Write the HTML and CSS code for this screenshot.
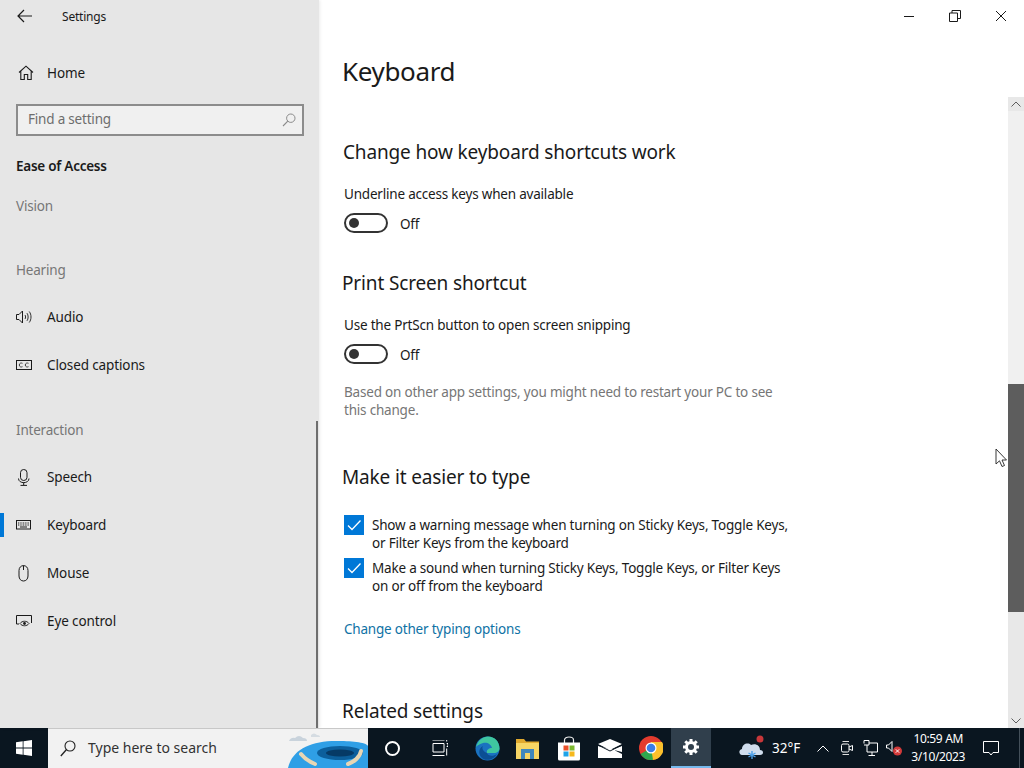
FILE: index.html
```html
<!DOCTYPE html>
<html lang="en">

<head>
    <meta charset="UTF-8">
    <title>Settings</title>
    <link rel="stylesheet" href="styles.css">
</head>

<body>
    <div class="window">
        <!-- Left navigation -->
        <aside class="sidebar">
            <div class="app-title">
                <svg class="back-icon" width="16" height="14" viewBox="0 0 16 14"><path d="M7 1 1 7l6 6M1 7h14" fill="none" stroke="#1a1a1a" stroke-width="1.2"/></svg>
                <span>Settings</span>
            </div>

            <div class="nav-item nav-home">
                <svg class="nav-icon" width="16" height="16" viewBox="0 0 16 16"><path d="M1 7.5 8 1.2l7 6.3M2.8 6.2V14.500H6.300V9.500H9.700V14.500H13.200V6.200" fill="none" stroke="#1a1a1a" stroke-width="1.1"/></svg>
                <span>Home</span>
            </div>

            <div class="search-box">
                <span>Find a setting</span>
                <svg width="14" height="14" viewBox="0 0 14 14"><circle cx="8.800" cy="5.200" r="4.200" fill="none" stroke="#8a8a8a"/><path d="M5.800 8.200 1 13" stroke="#8a8a8a" stroke-width="1.1"/></svg>
            </div>

            <div class="group-title">Ease of Access</div>
            <div class="section-label label-vision">Vision</div>
            <div class="section-label label-hearing">Hearing</div>

            <div class="nav-item">
                <svg class="nav-icon" width="16" height="14" viewBox="0 0 16 14"><path d="M.5 4.500H3L6.500 1V13L3 9.500H.5Z" fill="none" stroke="#1a1a1a"/><path d="M9 5C9.800 6 9.800 8 9 9M11 3.200C12.500 5 12.500 9 11 10.800M13.200 1.500C15.600 4.500 15.600 9.500 13.200 12.500" fill="none" stroke="#1a1a1a" stroke-width=".9"/></svg>
                <span>Audio</span>
            </div>
            <div class="nav-item">
                <svg class="nav-icon" width="16" height="10" viewBox="0 0 16 10"><rect x=".5" y=".5" width="15" height="9" fill="none" stroke="#1a1a1a"/><path d="M6.500 3.300C5 2.600 3.300 3.200 3.300 5S5 7.400 6.500 6.700M12.500 3.300C11 2.600 9.300 3.200 9.300 5S11 7.400 12.500 6.700" fill="none" stroke="#1a1a1a" stroke-width=".8"/></svg>
                <span>Closed captions</span>
            </div>

            <div class="section-label label-interaction">Interaction</div>

            <div class="nav-item">
                <svg class="nav-icon" width="16" height="17" viewBox="0 0 16 17"><rect x="4.500" y=".5" width="6.500" height="11" rx="3.200" fill="none" stroke="#1a1a1a"/><path d="M2.500 9.500C2.500 15 13 15 13 9.500M7.700 13.500V16M4.500 16.400H11" fill="none" stroke="#1a1a1a"/></svg>
                <span>Speech</span>
            </div>
            <div class="nav-item nav-active">
                <svg class="nav-icon" width="16" height="10" viewBox="0 0 16 10"><rect x=".5" y=".5" width="14" height="8.500" fill="none" stroke="#1a1a1a"/><path d="M2 3h11M2 5h11" stroke="#1a1a1a" stroke-dasharray="1 .7"/><path d="M4 7h7" stroke="#1a1a1a"/></svg>
                <span>Keyboard</span>
            </div>
            <div class="nav-item">
                <svg class="nav-icon" width="16" height="17" viewBox="0 0 16 17"><path d="M3 5.500C3 2.500 5 .6 7.500 .6S12 2.500 12 5.500V11C12 14 10 16 7.500 16S3 14 3 11ZM7.500 .6V5" fill="none" stroke="#1a1a1a"/></svg>
                <span>Mouse</span>
            </div>
            <div class="nav-item">
                <svg class="nav-icon" width="16" height="12" viewBox="0 0 16 12"><path d="M.5 9V.5H15.500V8" fill="none" stroke="#1a1a1a"/><path d="M.5 9H3" stroke="#1a1a1a"/><path d="M4 8.500C6 5.500 11 5.500 13 8.500 11 11.500 6 11.500 4 8.500Z" fill="none" stroke="#1a1a1a" stroke-width=".9"/><circle cx="8.500" cy="8.500" r="1.400" fill="#1a1a1a"/></svg>
                <span>Eye control</span>
            </div>

            <div class="sidebar-thumb"></div>
        </aside>

        <!-- Page content -->
        <main class="main">
            <header class="main-header">
                <h1>Keyboard</h1>
                <div class="window-controls">
                    <svg width="12" height="12" viewBox="0 0 12 12"><path d="M1 6.500H11" stroke="#1a1a1a"/></svg>
                    <svg width="12" height="12" viewBox="0 0 12 12"><path d="M.5 3H8.500V11.500H.5ZM3 3V.5H11.500V8.500H8.500" fill="none" stroke="#1a1a1a"/></svg>
                    <svg width="12" height="12" viewBox="0 0 12 12"><path d="M1 1 11 11M11 1 1 11" stroke="#1a1a1a"/></svg>
                </div>
            </header>

            <div class="content-row">
                <div class="content">
                    <section class="section-first">
                        <h2>Change how keyboard shortcuts work</h2>
                        <div class="field-label">Underline access keys when available</div>
                        <div class="toggle-row">
                            <span class="toggle"></span>
                            <span class="toggle-text">Off</span>
                        </div>
                    </section>

                    <section class="section-print">
                        <h2>Print Screen shortcut</h2>
                        <div class="field-label">Use the PrtScn button to open screen snipping</div>
                        <div class="toggle-row">
                            <span class="toggle"></span>
                            <span class="toggle-text">Off</span>
                        </div>
                        <p class="note">Based on other app settings, you might need to restart your PC to see this change.</p>
                    </section>

                    <section class="section-type">
                        <h2>Make it easier to type</h2>
                        <div class="check-row">
                            <span class="check"><svg width="20" height="20" viewBox="0 0 20 20"><path d="M4 10.500 8 14.500 16.500 5.500" fill="none" stroke="#fff" stroke-width="1.3"/></svg></span>
                            <span>Show a warning message when turning on Sticky Keys, Toggle Keys, or Filter Keys from the keyboard</span>
                        </div>
                        <div class="check-row">
                            <span class="check"><svg width="20" height="20" viewBox="0 0 20 20"><path d="M4 10.500 8 14.500 16.500 5.500" fill="none" stroke="#fff" stroke-width="1.3"/></svg></span>
                            <span>Make a sound when turning Sticky Keys, Toggle Keys, or Filter Keys on or off from the keyboard</span>
                        </div>
                        <a class="link">Change other typing options</a>
                    </section>

                    <section class="section-related">
                        <h2>Related settings</h2>
                    </section>
                </div>

                <div class="scrollbar">
                    <div class="scroll-btn">
                        <svg width="10" height="6" viewBox="0 0 10 6"><path d="M.5 5.500 5 1l4.500 4.500" fill="none" stroke="#5d5d5d"/></svg>
                    </div>
                    <div class="scroll-gap-top"></div>
                    <div class="scroll-thumb"></div>
                    <div class="scroll-gap-bottom"></div>
                    <div class="scroll-btn">
                        <svg width="10" height="6" viewBox="0 0 10 6"><path d="M.5 .5 5 5l4.500-4.500" fill="none" stroke="#5d5d5d"/></svg>
                    </div>
                </div>
            </div>
        </main>

        <svg class="cursor" width="13" height="20" viewBox="0 0 13 20"><path d="M1 1V16L4.500 12.800 7 18.500 9.500 17.500 7 12H11.500Z" fill="#fff" stroke="#222" stroke-width=".9"/></svg>
    </div>

    <!-- Taskbar -->
    <footer class="taskbar">
        <div class="start">
            <svg width="16" height="16" viewBox="0 0 16 16"><path d="M0 2.300 6.700 1.300V7.600H0ZM7.500 1.200 16 0V7.600H7.500ZM0 8.400H6.700V14.700L0 13.700ZM7.500 8.400H16V16L7.500 14.800Z" fill="#fff"/></svg>
        </div>
        <div class="taskbar-search">
            <svg width="16" height="17" viewBox="0 0 16 17"><circle cx="10" cy="6" r="5" fill="none" stroke="#222" stroke-width="1.100"/><path d="M6.500 9.500 .8 16" stroke="#222" stroke-width="1.300"/></svg>
            <span>Type here to search</span>
            <svg class="search-art" width="82" height="40" viewBox="0 0 82 40">
                <path d="M3 13Q5 9 9 10 13 6 17 10 21 10 21 13Z" fill="#c9d3dc"/>
                <path d="M25 7Q28 4 31 7 34 7 34 9H25Z" fill="#d5dce2"/>
                <path d="M2 40C6 22 24 13 50 13 64 13 80 14 82 18V40Z" fill="#2f9fe6"/>
                <ellipse cx="54" cy="25" rx="23" ry="7" fill="#0c5f9c"/>
                <ellipse cx="54" cy="25" rx="14" ry="3.500" fill="#063a66"/>
                <path d="M15 26C19 31 24 34 29 36M62 36C68 34 74 29 75 23" fill="none" stroke="#e8d6b4" stroke-width="4" stroke-linecap="round"/>
            </svg>
        </div>

        <div class="task-icons">
            <div class="task-icon task-wide"><span class="cortana"></span></div>
            <div class="task-icon task-wide">
                <svg width="16" height="16" viewBox="0 0 16 16"><path d="M.5 0H12.500M.5 15.500H12.500M1 3.500H12V12H1Z" fill="none" stroke="#fff"/><path d="M14.700 0V1.500M14.700 3.500H16V6.500H14.700M14.700 8.500V15.500" fill="none" stroke="#fff"/></svg>
            </div>
            <div class="task-icon task-edge">
                <svg width="25" height="25" viewBox="0 0 25 25">
                    <circle cx="12.500" cy="12.500" r="12" fill="#1a72c0"/>
                    <path d="M1 11C3 4 8 .5 13 .5 20 .5 24.500 6 24.500 12.500 24.500 15 22 17 19 17H12C11 14 14 12 17 12 16 8 12 6 8 7 4 8 2 10 1 11Z" fill="#3fc6a0"/>
                    <path d="M12 17C13 20 18 21 22 18 19 24 10 26 6 21 3 17 4 12 8 10 6 13 9 16 12 17Z" fill="#0b4f94"/>
                </svg>
            </div>
            <div class="task-icon task-folder">
                <svg width="23" height="21" viewBox="0 0 23 21"><path d="M0 1H8L10 3.500H23V21H0Z" fill="#e0a92e"/><path d="M0 5H23V21H0Z" fill="#f6d565"/><path d="M5 11H18V21H14V15H9V21H5Z" fill="#3f87bd"/></svg>
            </div>
            <div class="task-icon">
                <svg width="24" height="25" viewBox="0 0 24 25"><path d="M7.500 8V4C7.500 0 16.500 0 16.500 4V8" fill="none" stroke="#eee" stroke-width="1.200"/><path d="M1 6.500H23V23Q23 24.500 21.500 24.500H2.500Q1 24.500 1 23Z" fill="#fff"/><rect x="6.500" y="9.500" width="5" height="5" fill="#e8502a"/><rect x="12.500" y="9.500" width="5" height="5" fill="#7cb82f"/><rect x="6.500" y="15.500" width="5" height="5" fill="#1fa3e8"/><rect x="12.500" y="15.500" width="5" height="5" fill="#f6b81c"/></svg>
            </div>
            <div class="task-icon">
                <svg width="24" height="19" viewBox="0 0 24 19"><path d="M0 5 12 0 24 5 12 11Z" fill="#fff"/><path d="M0 7V19H24V15L9 7.500 12 11.500 24 7V13Z" fill="#fff"/><path d="M0 6 12 12 24 6" fill="none" stroke="#0a1620"/></svg>
            </div>
            <div class="task-icon">
                <svg width="24" height="24" viewBox="0 0 24 24">
                    <circle cx="12" cy="12" r="12" fill="#e33b2e"/>
                    <path d="M12 6H23A12 12 0 0 1 12 24Z" fill="#fbc02d"/>
                    <path d="M12 12 14 23.800A12 12 0 0 1 1.600 18Z" fill="#2fa84f"/>
                    <circle cx="12" cy="12" r="5.500" fill="#fff"/>
                    <circle cx="12" cy="12" r="4.300" fill="#3b7de8"/>
                </svg>
            </div>
            <div class="task-icon task-active">
                <svg width="18" height="18" viewBox="0 0 18 18"><path d="M9 1V17M1 9H17M3.300 3.300 14.700 14.700M14.700 3.300 3.300 14.700" stroke="#fff" stroke-width="3"/><circle cx="9" cy="9" r="6" fill="#fff"/><circle cx="9" cy="9" r="3" fill="#303f4c"/></svg>
            </div>
        </div>

        <div class="tray">
            <div class="weather">
                <svg width="26" height="26" viewBox="0 0 26 26">
                    <path d="M3 20C0 20-1 15 3 14 3 9 9 7 12 10 16 8 21 10 21 15 25 15 25 20 21 20Z" fill="#cfdcec"/>
                    <path d="M13 16V24M9.500 18 16.500 22M16.500 18 9.500 22" stroke="#4a9fe8" stroke-width="1.400"/>
                    <circle cx="21" cy="4" r="3.500" fill="#c8373a"/>
                </svg>
                <span>32°F</span>
            </div>
            <svg class="tray-chevron" width="12" height="7" viewBox="0 0 12 7"><path d="M.5 6.500 6 1l5.500 5.500" fill="none" stroke="#fff"/></svg>
            <svg class="tray-meet" width="12" height="16" viewBox="0 0 12 16"><path d="M1.500 1.500H8M1.500 14.500H8" stroke="#ddd"/><rect x=".5" y="4" width="7.500" height="8" rx="1.500" fill="none" stroke="#fff"/><path d="M8 7 11.500 5.500V10.500L8 9" fill="none" stroke="#fff"/></svg>
            <svg class="tray-net" width="16" height="16" viewBox="0 0 16 16"><path d="M2 3.500V.5H7V5H2M7 3H15.500V12H5V5M10 12V15M6.500 15.500H13" fill="none" stroke="#fff"/></svg>
            <svg class="tray-volume" width="16" height="16" viewBox="0 0 16 16"><path d="M.5 5H2.500L6 1.500V11.500L2.500 8H.5Z" fill="none" stroke="#fff"/><circle cx="11.500" cy="11" r="4.500" fill="#d23a3a"/><path d="M9.800 9.300 13.200 12.700M13.200 9.300 9.800 12.700" stroke="#fff"/></svg>
            <div class="clock">
                <span>10:59 AM</span>
                <span>3/10/2023</span>
            </div>
            <svg class="tray-notify" width="16" height="15" viewBox="0 0 16 15"><path d="M.5 .5H15.500V11.500H10L8 14 6 11.500H.5Z" fill="none" stroke="#fff"/></svg>
            <span class="show-desktop"></span>
        </div>
    </footer>
</body>

</html>
```

FILE: styles.css
```css
html, body {
    margin: 0;
    height: 768px;
    overflow: hidden;
}

body {
    font-family: "Noto Sans", "Open Sans", sans-serif;
    font-size: 13.5px;
    letter-spacing: -0.2px;
    color: #1a1a1a;
    background: #ffffff;
}

.window {
    position: relative;
    display: flex;
    height: 728px;
}

/* Sidebar */
.sidebar {
    position: relative;
    width: 319px;
    flex-shrink: 0;
    box-sizing: border-box;
    background: #e6e6e6;
    box-shadow: 1px 0 3px rgba(0, 0, 0, 0.08);
    display: flex;
    flex-direction: column;
}

.app-title {
    display: flex;
    align-items: center;
    height: 32px;
    padding-left: 17px;
    font-size: 12px;
}

.back-icon {
    margin-right: 29px;
}

.nav-item {
    position: relative;
    display: flex;
    align-items: center;
    height: 48px;
    padding-left: 16px;
    flex-shrink: 0;
    letter-spacing: -0.12px;
}

.nav-icon {
    margin-right: 15px;
}

.nav-home {
    margin-top: 17px;
}

.nav-home .nav-icon {
    margin-left: 2px;
    margin-right: 13px;
}

.nav-active::before {
    content: "";
    position: absolute;
    left: 0;
    top: 12px;
    width: 4px;
    height: 24px;
    background: #0078d7;
}

.search-box {
    display: flex;
    align-items: center;
    justify-content: space-between;
    box-sizing: border-box;
    height: 32px;
    margin: 7px 15px 0 16px;
    padding: 0 6px 0 10px;
    border: 2px solid #8c8c8c;
    background: #f0f0f0;
    color: #6d6d6d;
}

.search-box span {
    margin-top: -3px;
}

.group-title {
    margin: 20px 16px 0;
    line-height: 20px;
    font-weight: 600;
    letter-spacing: -0.25px;
}

.section-label {
    margin-left: 16px;
    line-height: 20px;
    color: #767676;
}

.label-vision {
    margin-top: 20px;
}

.label-hearing {
    margin-top: 44px;
    margin-bottom: 13px;
}

.label-interaction {
    margin-top: 31px;
    margin-bottom: 13px;
}

.sidebar-thumb {
    position: absolute;
    right: 1px;
    top: 421px;
    bottom: 0;
    width: 2px;
    background: #6e6e6e;
}

/* Main area */
.main {
    flex: 1;
    min-width: 0;
    display: flex;
    flex-direction: column;
}

.main-header {
    display: flex;
    justify-content: space-between;
    height: 97px;
    flex-shrink: 0;
}

h1 {
    margin: 49px 0 0 23px;
    font-size: 26px;
    line-height: 44px;
    font-weight: 400;
    letter-spacing: -0.35px;
}

.window-controls {
    display: flex;
    gap: 34px;
    padding: 10px 17px 0 0;
    height: 12px;
}

.content-row {
    flex: 1;
    min-height: 0;
    display: flex;
}

.content {
    flex: 1;
    min-width: 0;
    overflow: hidden;
    padding-left: 25px;
}

h2 {
    margin: 0 0 0 -2px;
    font-size: 19px;
    line-height: 28px;
    font-weight: 400;
    letter-spacing: -0.15px;
}

.section-first h2 {
    margin-left: -1px;
}

.section-first {
    padding-top: 41px;
}

.section-print {
    padding-top: 36px;
}

.section-type {
    padding-top: 44px;
}

.section-related {
    padding-top: 58px;
}

.field-label {
    margin-top: 18px;
    line-height: 20px;
}

.toggle-row {
    display: flex;
    align-items: center;
    gap: 12px;
    margin-top: 9px;
    height: 20px;
}

.toggle-text {
    margin-top: 2px;
}

.toggle {
    position: relative;
    box-sizing: border-box;
    width: 44px;
    height: 20px;
    border: 2px solid #333333;
    border-radius: 10px;
}

.toggle::after {
    content: "";
    position: absolute;
    left: 3px;
    top: 3px;
    width: 10px;
    height: 10px;
    border-radius: 50%;
    background: #333333;
}

.note {
    width: 450px;
    margin: 19px 0 0;
    line-height: 18px;
    color: #767676;
}

.check-row {
    display: flex;
    gap: 8px;
    width: 450px;
    line-height: 18px;
    margin-bottom: 7px;
}

.section-type h2 {
    margin-bottom: 25px;
}

.check {
    width: 20px;
    height: 20px;
    margin-top: -1px;
    flex-shrink: 0;
    background: #0078d7;
}

.check svg {
    display: block;
}

.link {
    display: block;
    margin-top: 24px;
    line-height: 20px;
    color: #0f72a5;
}

.scrollbar {
    width: 16px;
    flex-shrink: 0;
    display: flex;
    flex-direction: column;
}

.scroll-btn {
    height: 14px;
    flex-shrink: 0;
    display: flex;
    align-items: center;
    justify-content: center;
    background: #e8e8e8;
}

.scroll-gap-top {
    height: 273px;
    background: #f0f0f0;
}

.scroll-thumb {
    height: 228px;
    background: #5d5d5d;
}

.scroll-gap-bottom {
    flex: 1;
    background: #e8e8e8;
}

.cursor {
    position: absolute;
    left: 995px;
    top: 448px;
}

/* Taskbar */
.taskbar {
    display: flex;
    align-items: center;
    height: 40px;
    background: #0a1620;
    color: #ffffff;
}

.start {
    width: 48px;
    height: 40px;
    display: flex;
    align-items: center;
    justify-content: center;
}

.taskbar-search {
    position: relative;
    display: flex;
    align-items: center;
    box-sizing: border-box;
    width: 320px;
    height: 40px;
    padding-left: 12px;
    background: #f2f2f2;
    border-top: 1px solid #c8c8c8;
    color: #333333;
    font-size: 14px;
    letter-spacing: 0;
    overflow: hidden;
}

.taskbar-search > span {
    margin: -3px 0 0 12px;
}

.search-art {
    position: absolute;
    right: 0;
    top: -1px;
}

.task-icons {
    display: flex;
    height: 40px;
}

.task-icon {
    width: 41px;
    height: 40px;
    display: flex;
    align-items: center;
    justify-content: center;
}

.task-wide {
    width: 48px;
}

.task-edge {
    width: 46px;
}

.task-folder {
    width: 34px;
    margin-right: 4px;
}

.cortana {
    box-sizing: border-box;
    width: 15px;
    height: 15px;
    border: 2px solid #ffffff;
    border-radius: 50%;
}

.task-active {
    box-sizing: border-box;
    background: #303f4c;
    border-bottom: 2px solid #76b9ed;
    width: 40px;
}

.tray {
    flex: 1;
    display: flex;
    align-items: center;
    height: 40px;
    padding-left: 28px;
}

.weather {
    display: flex;
    align-items: center;
    gap: 7px;
    font-size: 13.5px;
    letter-spacing: 0;
}

.tray-chevron {
    margin-left: 17px;
}

.tray-meet {
    margin-left: 12px;
}

.tray-net {
    margin-left: 9px;
}

.tray-volume {
    margin-left: 8px;
}

.clock {
    display: flex;
    flex-direction: column;
    align-items: center;
    width: 60px;
    margin-left: 6px;
    font-size: 12px;
    line-height: 18px;
    letter-spacing: -0.35px;
}

.tray-notify {
    margin-left: 15px;
}

.show-desktop {
    width: 1px;
    height: 40px;
    margin-left: 20px;
    background: #44505a;
}
```
